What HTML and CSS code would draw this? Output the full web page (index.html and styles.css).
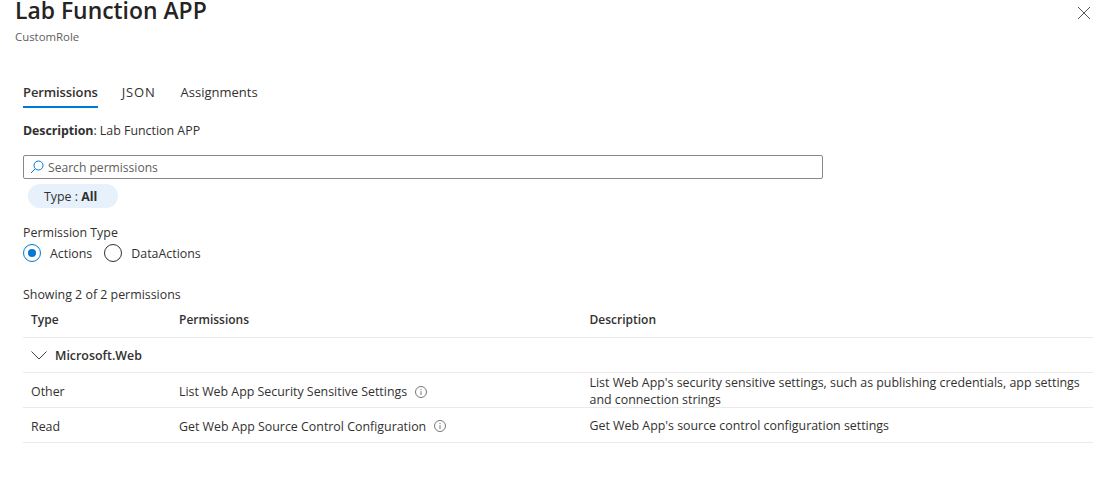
FILE: index.html
```html
<!DOCTYPE html>
<html lang="en">
<head>
<meta charset="utf-8">
<title>Lab Function APP</title>
<link rel="stylesheet" href="styles.css">
</head>
<body>
<div class="panel">
  <header class="head">
    <div>
      <h1 class="title">Lab Function APP</h1>
      <div class="subtitle">CustomRole</div>
    </div>
    <svg class="close" width="14" height="14" viewBox="0 0 14 14"><path d="M1 1l12 12M13 1L1 13" stroke="#555" stroke-width="1" fill="none"/></svg>
  </header>
  <main class="content">
    <nav class="tabs">
      <span class="tab active">Permissions</span>
      <span class="tab json">JSON</span>
      <span class="tab">Assignments</span>
    </nav>
    <p class="desc"><b>Description</b>: Lab Function APP</p>
    <div class="search">
      <svg width="14" height="14" viewBox="0 0 14 14"><circle cx="8.5" cy="5.5" r="4.5" fill="none" stroke="#0078d4"/><path d="M5.2 8.8L1 13" stroke="#0078d4" fill="none"/></svg>
      <span>Search permissions</span>
    </div>
    <div class="pill">Type : <b>All</b></div>
    <div class="ptype">Permission Type</div>
    <div class="radios">
      <span class="radio on"></span><span class="rlabel">Actions</span>
      <span class="radio"></span><span class="rlabel">DataActions</span>
    </div>
    <div class="showing">Showing 2 of 2 permissions</div>
    <div class="row hdr"><span>Type</span><span>Permissions</span><span>Description</span></div>
    <div class="row group">
      <svg width="16" height="9" viewBox="0 0 16 9"><path d="M0.5 0.5L8 8L15.5 0.5" fill="none" stroke="#444"/></svg>
      <span>Microsoft.Web</span>
    </div>
    <div class="row">
      <span>Other</span>
      <span class="perm">List Web App Security Sensitive Settings <svg width="12" height="12" viewBox="0 0 12 12"><circle cx="6" cy="6" r="5.5" fill="none" stroke="#777"/><path d="M6 5.2V9M6 3v1.2" stroke="#777" fill="none"/></svg></span>
      <span class="d">List Web App's security sensitive settings, such as publishing credentials, app settings and connection strings</span>
    </div>
    <div class="row">
      <span>Read</span>
      <span class="perm">Get Web App Source Control Configuration <svg width="12" height="12" viewBox="0 0 12 12"><circle cx="6" cy="6" r="5.5" fill="none" stroke="#777"/><path d="M6 5.2V9M6 3v1.2" stroke="#777" fill="none"/></svg></span>
      <span class="d">Get Web App's source control configuration settings</span>
    </div>
  </main>
</div>
</body>
</html>
```
FILE: styles.css
```css
html, body { margin: 0; padding: 0; background: #fff; }
body { font-family: "Open Sans", "Noto Sans", sans-serif; font-size: 12.4px; color: #323130; overflow: hidden; height: 489px; }
.panel { width: 1093px; }
.head { display: flex; justify-content: space-between; padding: 0 2px 0 15px; height: 44px; }
.title { margin: 0; font-size: 22.9px; font-weight: 600; line-height: 22px; color: #252423; }
.subtitle { font-size: 11.4px; color: #605e5c; line-height: 16px; margin-top: 7px; }
.close { margin: 6px 0 0 0; }
.content { padding: 0 0 0 23px; }
.tabs { display: flex; gap: 24px; margin-top: 34px; height: 30px; font-size: 13px; }
.tab { padding-top: 5px; box-sizing: border-box; }
.tab.active { font-weight: 600; border-bottom: 2px solid #0078d4; height: 30px; letter-spacing: -0.1px; }
.tab.json { letter-spacing: 0.8px; margin-right: 1px; }
.desc { margin: 15px 0 0; line-height: 16px; }
.desc b { letter-spacing: -0.08px; }
.search { display: flex; align-items: center; gap: 4px; width: 792px; height: 22px; margin-top: 16px; padding-left: 6px; border: 1px solid #8a8886; border-radius: 2px; color: #605e5c; font-size: 12.1px; }
.pill { width: 90px; height: 24px; margin: 5px 0 0 5px; box-sizing: border-box; padding: 1px 0 0 16px; line-height: 24px; background: #e6f1fb; border-radius: 12px; }
.ptype { margin-top: 17px; line-height: 16px; }
.radios { display: flex; align-items: center; height: 20px; margin-top: 2px; }
.radio { width: 18px; height: 18px; box-sizing: border-box; border: 1px solid #323130; border-radius: 50%; position: relative; margin-right: 9px; }
.rlabel { margin-right: 12px; }
.radio.on { border-color: #0078d4; }
.radio.on::after { content: ""; position: absolute; left: 4px; top: 4px; width: 8px; height: 8px; border-radius: 50%; background: #0078d4; }
.showing { margin-top: 24px; line-height: 16px; }
.row { display: grid; grid-template-columns: 148px 410.5px 1fr; align-items: center; padding: 2px 0 0 8px; height: 32px; border-bottom: 1px solid #edebe9; }
.row.hdr { font-weight: 600; height: 32px; padding: 0 0 2px 8px; font-size: 12px; }
.row.group { display: flex; gap: 8px; font-weight: 600; padding-top: 1px; height: 33px; }
.perm { display: flex; align-items: center; gap: 8px; }
.d { line-height: 16.5px; width: 500px; }
```
